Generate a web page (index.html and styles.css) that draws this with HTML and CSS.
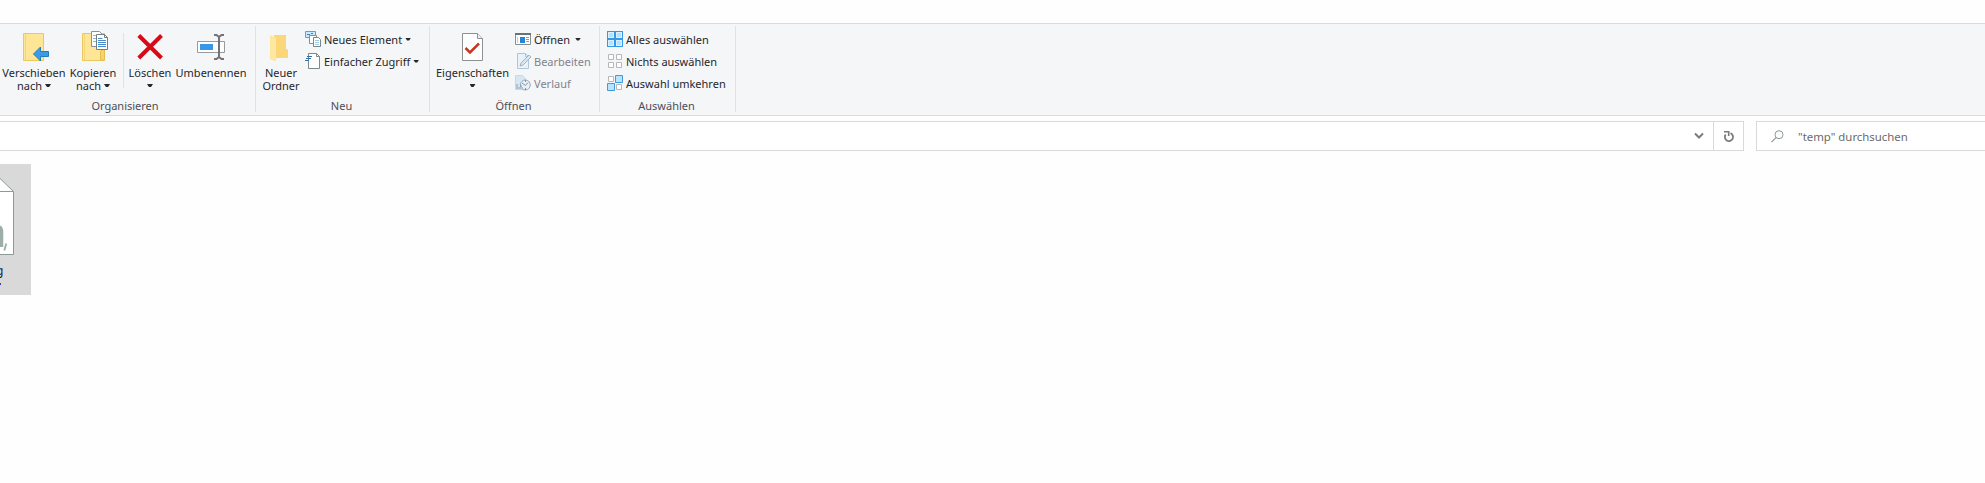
FILE: index.html
```html
<!DOCTYPE html>
<html lang="de">
<head>
<meta charset="utf-8">
<title>temp</title>
<link rel="stylesheet" href="styles.css">
</head>
<body>
<header class="ribbon">
  <section class="group organize">
    <div class="tools">
      <button class="big move">
        <svg width="68" height="28" viewBox="0 33 68 28"><path d="M23.5 33.5H43.5V60.5H23.5Z" fill="#ffe596" stroke="#ecc95d"/><path d="M25.5 34v26" stroke="#f3d67c"/><path d="M33.500 54l7-7v4.500h8v5h-8v4.500z" fill="#3c9be8" stroke="#217dbb"/></svg>
        <span class="label">Verschieben</span><span class="label">nach<i class="arrow"></i></span>
      </button>
      <button class="big copy">
        <svg width="50" height="30" viewBox="68 31 50 30"><path d="M82.500 33.500h22v27h-22z" fill="#ffe596" stroke="#ecc95d"/><path d="M84.500 34v26" stroke="#f3d67c"/><path d="M100.500 60V51l4-2v11z" fill="#f4d374" stroke="#e5bc50"/><path d="M91.500 31.500h8l3 3v12h-11z" fill="#fff" stroke="#86919a"/><path d="M93 35.500h4M93 38.500h4M93 41.500h4" stroke="#8bb6db"/><path d="M96.500 34.500h8l3 3v12h-11z" fill="#fff" stroke="#737d83"/><path d="M104.500 34.500v3h3" fill="none" stroke="#737d83"/><path d="M98 38.500h4.500M98 40.500h8M98 42.500h8M98 44.500h8M98 46.500h8" stroke="#498bd0"/></svg>
        <span class="label">Kopieren</span><span class="label">nach<i class="arrow"></i></span>
      </button>
      <div class="separator"></div>
      <button class="big delete">
        <svg width="52" height="28" viewBox="124 33 52 28"><path d="M138.800 35.500l22.700 22.500M161.500 35.500l-22.700 22.500" stroke="#d70a18" stroke-width="4"/></svg>
        <span class="label">Löschen</span><i class="arrow below"></i>
      </button>
      <button class="big rename">
        <svg width="70" height="28" viewBox="176 33 70 28"><path d="M197.500 41.500h27v11h-27z" fill="#fff" stroke="#969ba0"/><path d="M200 44h13v6h-13z" fill="#3898e7"/><path d="M214 35h2.500l2.500 2 2.500-2h2.500M214 59h2.500l2.500-2 2.500 2h2.500M219 36v22" fill="none" stroke="#747279" stroke-width="2"/></svg>
        <span class="label">Umbenennen</span>
      </button>
    </div>
    <div class="caption">Organisieren</div>
  </section>

  <section class="group create">
    <div class="tools">
      <button class="big folder">
        <svg width="50" height="28" viewBox="256 33 50 28"><path d="M274 35h12v14l2 1v8h-14z" fill="#f8d878"/><path d="M270 35l6 3v24l-6-3z" fill="#ffe7a1"/><path d="M276 38l6-3h4v14l2 1v8h-12z" fill="#fbd777"/></svg>
        <span class="label">Neuer</span><span class="label">Ordner</span>
      </button>
      <div class="list">
        <button class="small"><svg width="16" height="16" viewBox="0 0 16 16"><path d="M.500.500h10v6H.500z" fill="#c9e9fd" stroke="#55a1dc"/><path d="M2 3.500h3M6 2.500h2" stroke="#3385ca"/><path d="M4.500 4.500h7v8h-7z" fill="#fff" stroke="#848d92"/><path d="M8.500 6.500h5l2 2v7h-7z" fill="#fff" stroke="#7b858a"/><path d="M10 9.500h4M10 11.500h4M10 13.500h4" stroke="#a0cbe4"/></svg><span>Neues Element</span><i class="arrow"></i></button>
        <button class="small"><svg width="16" height="16" viewBox="0 0 16 16"><path d="M3.500.500h8l3 3v12h-11z" fill="#fff" stroke="#7b8989"/><path d="M11.500.500v3h3" fill="none" stroke="#7b8989"/><path d="M2 3.500h5M1 5.500h5M0 7.500h4" stroke="#356ea6"/></svg><span>Einfacher Zugriff</span><i class="arrow"></i></button>
      </div>
    </div>
    <div class="caption">Neu</div>
  </section>

  <section class="group open">
    <div class="tools">
      <button class="big properties">
        <svg width="85" height="28" viewBox="430 33 85 28"><path d="M462.500 33.500h15l5 5v22h-20z" fill="#fff" stroke="#8b9191"/><path d="M477.500 33.500v5h5" fill="#edf0f0" stroke="#8b9191"/><path d="M465.500 48l4.500 4.500 9-9" fill="none" stroke="#c9371c" stroke-width="2.500"/></svg>
        <span class="label">Eigenschaften</span><i class="arrow below"></i>
      </button>
      <div class="list">
        <button class="small opener"><svg width="16" height="16" viewBox="0 0 16 16"><path d="M.500 2.500h15v11H.500z" fill="#fff" stroke="#8a8e91"/><path d="M0 3h16" stroke="#65747a" stroke-width="2"/><path d="M2.500 6v6" stroke="#ccc"/><path d="M5 6h5v6H5z" fill="#2686d5"/><path d="M11 6.500h3M11 8.500h3M11 10.500h3" stroke="#999"/></svg><span>Öffnen</span><i class="arrow"></i></button>
        <button class="small off"><svg width="16" height="16" viewBox="0 0 16 16"><path d="M2.500.500h8l3 3v12h-11z" fill="#eaf2f9" stroke="#b0c6d8"/><path d="M10.500.500v3h3" fill="none" stroke="#b0c6d8"/><path d="M5 13l1-3 8-8 2 2-8 8z" fill="#d9e6ef" stroke="#91a8b8" stroke-width=".8"/></svg><span>Bearbeiten</span></button>
        <button class="small off"><svg width="16" height="16" viewBox="0 0 16 16"><path d="M.500.500h7l3 3v11H.500z" fill="#d6e6f3" stroke="#c5d9e9"/><circle cx="10.300" cy="10" r="5" fill="#e9f0f5" stroke="#96aab9"/><path d="M7 8l3.500 2.500L13 7.500M10.500 5v2M10.500 13v2M5 11h2" fill="none" stroke="#8097a9"/><path d="M2 9v4h6" fill="none" stroke="#abc5d8" stroke-width="2"/></svg><span>Verlauf</span></button>
      </div>
    </div>
    <div class="caption">Öffnen</div>
  </section>

  <section class="group select">
    <div class="tools">
      <div class="list">
        <button class="small"><svg width="16" height="16" viewBox="0 0 16 16"><path d="M0 0h16v16H0z" fill="#3498e7"/><path d="M1 1h6v6H1zM9 1h6v6H9zM1 9h6v6H1zM9 9h6v6H9z" fill="#d9f1ff"/><path d="M2 2h4v4H2zM10 2h4v4h-4zM2 10h4v4H2zM10 10h4v4h-4z" fill="#b5e2ff"/></svg><span>Alles auswählen</span></button>
        <button class="small"><svg width="16" height="16" viewBox="0 0 16 16"><path d="M1.500 1.500h5v5h-5zM9.500 1.500h5v5h-5zM1.500 9.500h5v5h-5zM9.500 9.500h5v5h-5z" fill="#fff" stroke="#b5b7b8"/></svg><span>Nichts auswählen</span></button>
        <button class="small"><svg width="16" height="16" viewBox="0 0 16 16"><path d="M1.500 1.500h5v5h-5zM9.500 9.500h5v5h-5z" fill="#fff" stroke="#b5b7b8"/><path d="M8.500.500h7v7h-7zM.500 8.500h7v7h-7z" fill="#b9e4ff" stroke="#3c9be3"/></svg><span>Auswahl umkehren</span></button>
      </div>
    </div>
    <div class="caption">Auswählen</div>
  </section>
</header>

<nav class="navigation">
  <div class="address">
    <button class="dropdown"><svg width="10" height="8" viewBox="0 0 10 8"><path d="M1 1.500l4 4 4-4" fill="none" stroke="#777d7e" stroke-width="2"/></svg></button>
    <button class="refresh"><svg width="12" height="13" viewBox="0 0 12 13"><path d="M7.500 3.200A4.100 4.100 0 1 1 2.700 4.500" fill="none" stroke="#777b7b" stroke-width="1.800"/><path d="M1 1.800h4.700v4.200" fill="none" stroke="#777b7b" stroke-width="1.600"/></svg></button>
  </div>
  <div class="search">
    <svg width="13" height="13" viewBox="0 0 13 13"><circle cx="8" cy="4.700" r="4" fill="none" stroke="#899997"/><path d="M5 7.700L.500 12.200" stroke="#899997" stroke-width="1.200"/></svg>
    <span>"temp" durchsuchen</span>
  </div>
</nav>

<main class="files">
  <div class="file">
    <svg width="31" height="131" viewBox="0 164 31 131"><path d="M-1 177.500L13.500 191.500V254.500H-1z" fill="#fff"/><path d="M-1 177.500L13.500 191.500V254.500H-1M-1 191.500H13.500" fill="none" stroke="#8c9997"/><path d="M-2 227q3.500 0 3.500 5v15" fill="none" stroke="#9daeaa" stroke-width="3.500"/><path d="M6.300 243.500l-2 7" stroke="#9daeaa" stroke-width="1.800"/></svg>
    <span class="filename">g</span>
    <span class="underline"></span>
  </div>
</main>
</body>
</html>
```
FILE: styles.css
```css
* { box-sizing: border-box; }
body {
  margin: 0;
  height: 483px;
  overflow: hidden;
  background: #fefefe;
  color: #26262b;
  font: 11px/13px "Noto Sans", "Open Sans", sans-serif;
}
button {
  padding: 0;
  border: 0;
  background: none;
  color: inherit;
  font: inherit;
}
svg { display: block; flex: none; }
.ribbon {
  display: flex;
  height: 93px;
  margin-top: 23px;
  padding-top: 2px;
  border: solid #d9dadc;
  border-width: 1px 0;
  background: #f5f6f8;
}
.group {
  display: flex;
  flex-direction: column;
  height: 86px;
  border-right: 1px solid #e0e2e5;
}
.organize { width: 256px; }
.create { width: 174px; }
.open { width: 170px; }
.select { width: 136px; }
.tools { display: flex; height: 73px; }
.caption {
  padding-right: 2px;
  text-align: center;
  color: #4d4d57;
  line-height: 13px;
}
.organize .caption { padding-right: 5px; }
.big {
  display: flex;
  flex-direction: column;
  align-items: center;
  padding-top: 7px;
  white-space: nowrap;
}
.big svg { margin-bottom: 5px; }
.copy { padding-top: 5px; }
.label { display: flex; align-items: center; height: 13px; }
.move { width: 68px; }
.copy { width: 50px; }
.delete { width: 52px; }
.rename { width: 70px; }
.folder { width: 50px; }
.properties { width: 85px; }
.separator {
  width: 1px;
  height: 55px;
  margin: 7px 0 0 5px;
  background: #e0e2e5;
}
.arrow {
  flex: none;
  width: 6px;
  height: 3px;
  margin-left: 3px;
  background: #26262b;
  clip-path: polygon(0 0, 100% 0, 67% 100%, 33% 100%);
}
.arrow.below { margin: 5px 0 0; }
.opener .arrow { margin-left: 5px; }
.list { padding-top: 2px; }
.create .list { margin-left: -1px; }
.select .list { margin-left: 7px; }
.small {
  display: flex;
  align-items: center;
  height: 22px;
  white-space: nowrap;
}
.small span { margin-left: 3px; }
.off { color: #83838e; }
.navigation { display: flex; gap: 12px; margin-top: 5px; }
.address, .search {
  display: flex;
  height: 30px;
  border: 1px solid #d9d9d9;
  background: #fff;
}
.address { width: 1744px; border-left: 0; justify-content: flex-end; }
.address button { display: grid; place-items: center; width: 30px; }
.address .dropdown { width: 28px; }
.address .refresh { border-left: 1px solid #d9d9d9; }
.search { flex: 1; align-items: center; border-right: 0; padding-left: 14px; color: #6a6a6c; }
.search span { margin-left: 14px; font-size: 11.400px; }
.files { padding-top: 13px; }
.file { position: relative; width: 31px; height: 131px; overflow: hidden; background: #d9d9d9; }
.filename { position: absolute; left: -4px; top: 100px; font-size: 12px; color: #16213b; }
.underline { position: absolute; left: 0; top: 119px; width: 1px; height: 2px; background: #4040c0; }
```
